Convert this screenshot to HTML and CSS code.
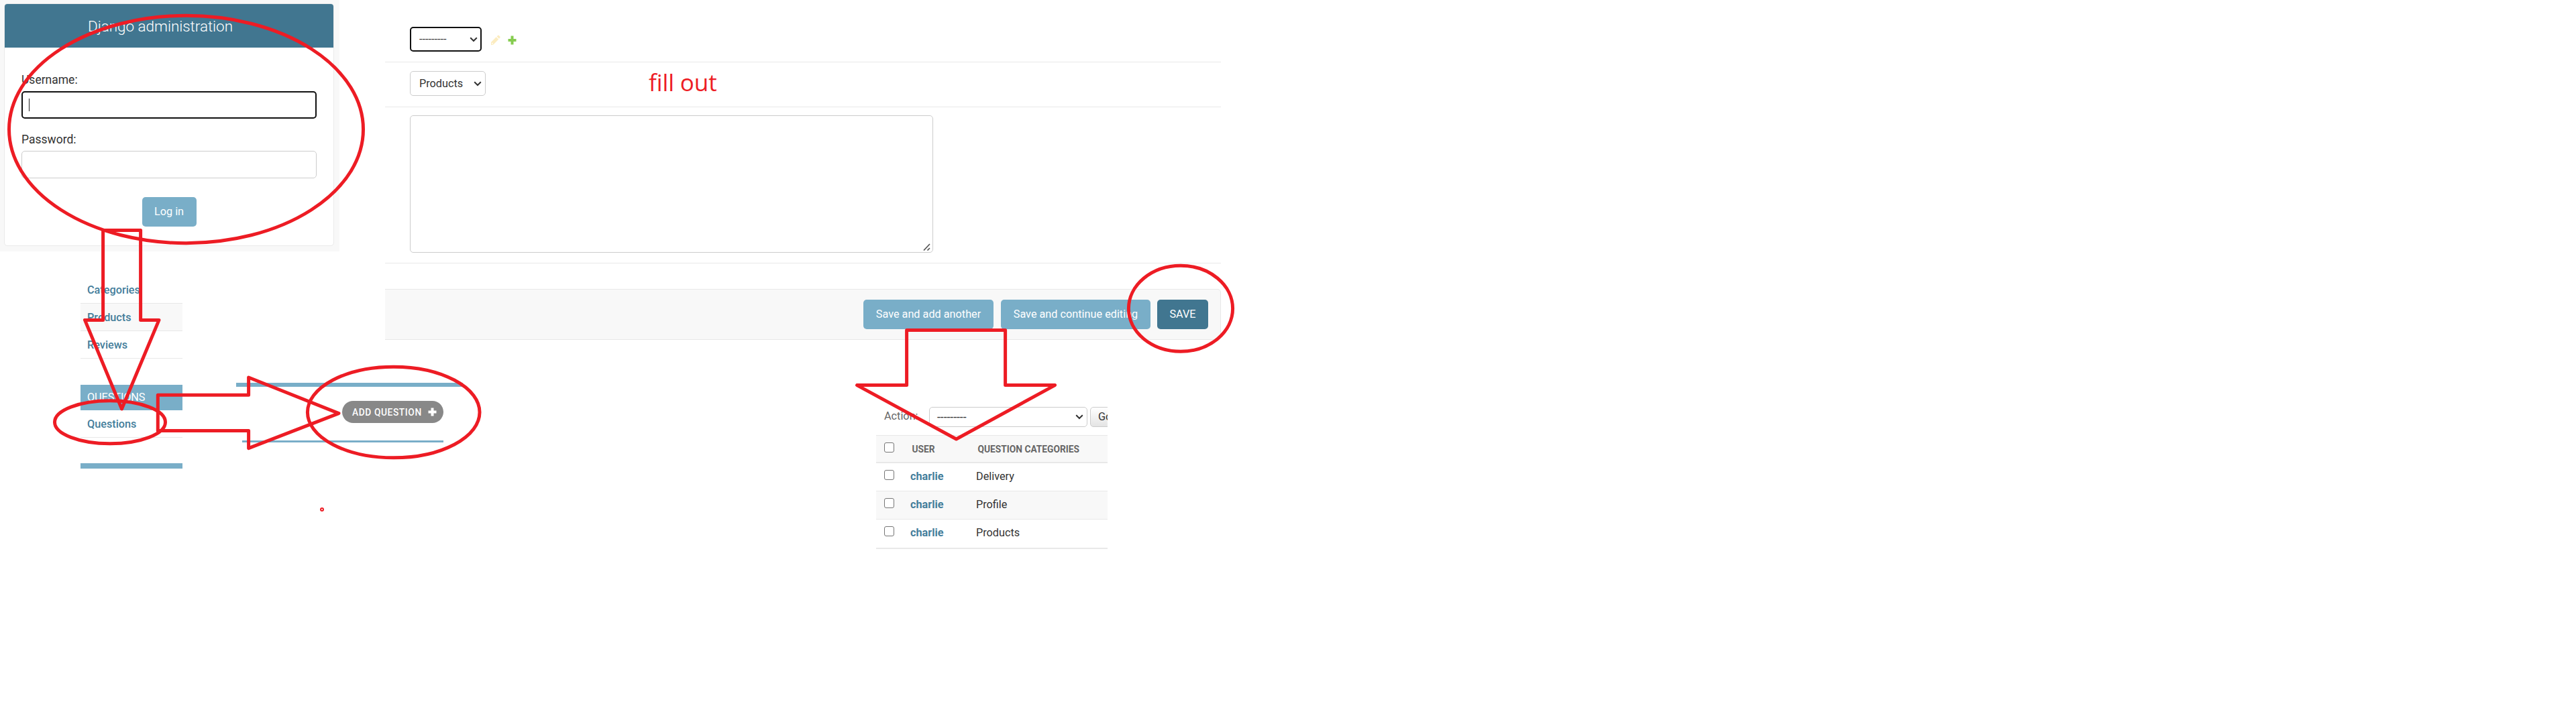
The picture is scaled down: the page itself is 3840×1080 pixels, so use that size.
FILE: index.html
```html
<!DOCTYPE html>
<html lang="en">
<head>
<meta charset="utf-8">
<title>Django administration walkthrough</title>
<link rel="stylesheet" href="styles.css">
</head>
<body>
<main class="board">

  <section class="piece login">
    <div class="login-card">
      <header class="login-header"><h1>Django administration</h1></header>
      <div class="login-form">
        <span class="label">Username:</span>
        <div class="field focused"><span class="caret"></span></div>
        <span class="label second">Password:</span>
        <div class="field"></div>
        <div class="login-submit"><span class="button">Log in</span></div>
      </div>
    </div>
  </section>

  <section class="piece sidebar">
    <a class="model">Categories</a>
    <a class="model alt">Products</a>
    <a class="model">Reviews</a>
    <h2 class="module">QUESTIONS</h2>
    <a class="model">Questions</a>
    <div class="sidebar-end"></div>
  </section>

  <section class="piece tools">
    <div class="tools-bar"></div>
    <div class="tools-body">
      <a class="add-link">ADD QUESTION
        <svg width="13" height="13" viewBox="0 0 13 13"><path d="M4.500 0.500h4v4h4v4h-4v4h-4v-4h-4v-4h4z" fill="#fff"/></svg>
      </a>
    </div>
  </section>

  <section class="piece form">
    <div class="form-row row-user">
      <div class="select focused">
        <span>---------</span>
        <svg class="chevron" width="12" height="8" viewBox="0 0 12 8"><path d="M1.200 1.200L6 6l4.800-4.800"/></svg>
      </div>
      <svg class="pencil" width="15" height="16" viewBox="0 0 15 16"><path d="M1 11L8.700 3.300l3.500 3.500L4.500 14.500 1 15.200zM9.600 2.400l1.400-1.400q.9-.8 1.800 0l1.500 1.600q.8.900 0 1.700L13 5.800z" fill="#fcecc0"/><circle cx="3" cy="12.700" r=".9" fill="#fff"/></svg>
      <svg class="plus" width="13" height="14" viewBox="0 0 13 14"><path d="M4.500 .5h4v4.500h4v4h-4v4.500h-4V9h-4V5h4z" fill="#86cc50"/></svg>
    </div>
    <div class="form-row row-category">
      <div class="select wide">
        <span>Products</span>
        <svg class="chevron" width="12" height="8" viewBox="0 0 12 8"><path d="M1.200 1.200L6 6l4.800-4.800"/></svg>
      </div>
      <span class="note">fill out</span>
    </div>
    <div class="form-row row-text">
      <div class="textarea">
        <svg width="11" height="11" viewBox="0 0 11 11"><path d="M1 10.500L10 1M6.500 10.500L10 7" fill="none" stroke="#555" stroke-width="1.700"/></svg>
      </div>
    </div>
    <footer class="submit-row">
      <span class="button">Save and add another</span>
      <span class="button">Save and continue editing</span>
      <span class="button primary">SAVE</span>
    </footer>
  </section>

  <section class="piece results">
    <div class="actions">
      <span class="actions-label">Action:</span>
      <div class="select small">
        <span>---------</span>
        <svg class="chevron" width="12" height="8" viewBox="0 0 12 8"><path d="M1.200 1.200L6 6l4.800-4.800"/></svg>
      </div>
      <span class="go">Go</span>
    </div>
    <div class="line head"><i class="check"></i><span>USER</span><span>QUESTION CATEGORIES</span></div>
    <div class="line"><i class="check"></i><b>charlie</b><span>Delivery</span></div>
    <div class="line alt"><i class="check"></i><b>charlie</b><span>Profile</span></div>
    <div class="line last"><i class="check"></i><b>charlie</b><span>Products</span></div>
  </section>

  <svg class="marks" width="3840" height="1080" viewBox="0 0 3840 1080">
    <ellipse cx="277.500" cy="193" rx="264" ry="169.700"/>
    <path d="M153.600 343.500H209.600V477.400H237L181.500 610 126.500 477.400H153.600Z"/>
    <ellipse cx="164" cy="629.700" rx="82.500" ry="32"/>
    <path d="M235.300 589.300H370.600V563L505 616.600 370.600 668.700V642.500H235.300Z"/>
    <ellipse cx="586.700" cy="615" rx="128.300" ry="67.800"/>
    <circle class="dot" cx="480" cy="760" r="2"/>
    <path d="M1351.600 492.600H1498.600V574.600H1572.600L1425.500 655 1277.500 574.600H1351.600Z"/>
    <ellipse cx="1760" cy="460.300" rx="77.600" ry="64"/>
  </svg>
</main>
</body>
</html>
```
FILE: styles.css
```css
* { box-sizing: border-box; }
body { margin: 0; background: #fff; font: 400 16.25px/20px Roboto, "Liberation Sans", sans-serif; color: #333; }
h1, h2 { margin: 0; font-weight: 400; }
svg { display: block; flex: none; }
.board { position: relative; width: 3840px; height: 1080px; overflow: hidden; }
.piece { position: absolute; }

.button { display: flex; align-items: center; justify-content: center; height: 44px; padding: 0 19px; border-radius: 5px; background: #79aec8; color: #fff; white-space: nowrap; }
.button.primary { background: #417690; }

/* login page */
.login { left: 0; top: 0; width: 506px; height: 375px; padding: 5px 8px 8px 6px; background: #f8f8f8; }
.login-card { height: 362px; border: 1px solid #eaeaea; border-radius: 5px; background: #fff; overflow: hidden; }
.login-header { display: flex; align-items: center; height: 65px; padding-left: 124px; background: #417690; color: #fff; }
.login-header h1 { font-size: 22.5px; font-weight: 300; letter-spacing: -0.05px; line-height: 28px; }
.login-form { display: flex; flex-direction: column; padding: 38px 25px 0; }
.label { font-size: 17.5px; line-height: 20px; }
.label.second { margin-top: 21px; }
.field { display: flex; align-items: center; height: 41px; margin-top: 7px; padding-left: 9px; border: 1px solid #ccc; border-radius: 5px; }
.field.focused { border: 2px solid #101010; }
.caret { width: 1px; height: 19px; background: #222; }
.login-submit { display: flex; justify-content: center; margin-top: 28px; }
.login-submit .button { width: 81px; }

/* model list */
.sidebar { left: 120px; top: 412px; width: 152px; }
.model { display: flex; align-items: center; height: 41px; padding: 1px 0 0 10px; border-bottom: 1px solid #e8e8e8; color: #447e9b; font-weight: 500; }
.model.alt { background: #f8f8f8; }
.module { display: flex; align-items: center; height: 38px; margin-top: 39px; padding-left: 10px; background: #79aec8; color: #fff; font-size: 16.25px; letter-spacing: -0.08px; }
.sidebar-end { height: 8px; margin-top: 38px; background: #79aec8; }

/* add button strip */
.tools { left: 352px; top: 571px; width: 338px; }
.tools-bar { height: 6px; background: #79aec8; }
.tools-body { display: flex; justify-content: flex-end; height: 83px; margin: 0 29px 0 9px; padding-top: 21px; border-bottom: 3px solid #79aec8; }
.add-link { display: flex; align-items: center; justify-content: space-between; width: 151px; height: 33px; padding: 0 10px 0 15px; border-radius: 17px; background: #888; color: #fff; font-size: 13.75px; font-weight: 500; letter-spacing: 0.6px; white-space: nowrap; }

/* change form */
.form { left: 574px; top: 0; width: 1246px; }
.form-row { display: flex; padding-left: 37px; border-bottom: 1px solid #e8e8e8; }
.row-user { height: 93px; padding-top: 40px; }
.row-category { height: 67px; padding-top: 13px; }
.row-text { height: 233px; padding-top: 12px; }
.select { display: flex; align-items: center; justify-content: space-between; width: 107px; height: 37px; padding: 0 5px 0 13px; border: 1px solid #ccc; border-radius: 5px; background: #fff; }
.select.focused { padding: 0 4px 0 12px; border: 2px solid #101010; }
.select.wide { width: 113px; }
.chevron path { fill: none; stroke: #333; stroke-width: 2; }
.pencil { margin: 12px 0 0 13px; }
.plus { margin: 13px 0 0 11px; }
.note { margin: -3px 0 0 243px; color: #ed1c24; font: 400 35px/40px "Open Sans", "Noto Sans", sans-serif; letter-spacing: -0.1px; white-space: nowrap; }
.textarea { display: flex; align-items: flex-end; justify-content: flex-end; width: 780px; height: 205px; padding: 0 3px 2px; border: 1px solid #ccc; border-radius: 5px; }
.submit-row { display: flex; justify-content: flex-end; height: 76px; margin-top: 38px; padding: 15px 18px; border: 1px solid #e8e8e8; border-left: 0; border-radius: 0 5px 5px 0; background: #f8f8f8; }
.submit-row .button { width: 194px; }
.submit-row .button:nth-child(2) { width: 223px; margin: 0 10px 0 11px; }
.submit-row .primary { width: 76px; padding: 0; }

/* change list */
.results { left: 1306px; top: 607px; width: 345px; overflow: hidden; }
.actions { display: flex; height: 42px; color: #666; }
.actions-label { flex: none; width: 79px; padding: 4px 0 0 12px; line-height: 20px; }
.select.small { flex: none; width: 236px; height: 30px; padding: 0 5px 0 11px; color: #333; font-size: 17.5px; }
.go { flex: none; width: 46px; height: 30px; margin-left: 4px; padding: 4px 0 0 11px; border: 1px solid #ccc; border-radius: 5px; background: linear-gradient(#fff, #e4e4e4); color: #333; line-height: 20px; }
.line { display: grid; grid-template-columns: 39px 98px 1fr; height: 42px; padding: 10px 0 0 12px; border-bottom: 1px solid #e8e8e8; white-space: nowrap; }
.line b { color: #447e9b; }
.line.alt { background: #f8f8f8; }
.line.last { height: 44px; border-bottom-width: 2px; }
.line.head { grid-template-columns: 41.5px 98px 1fr; border-top: 1px solid #e8e8e8; border-bottom-width: 2px; background: #f8f8f8; color: #666; font-size: 13.75px; font-weight: 700; }
.check { width: 15px; height: 15px; border: 1px solid #767676; border-radius: 3px; background: #fff; }

/* hand-drawn annotations */
.marks { position: absolute; left: 0; top: 0; fill: none; stroke: #ed1c24; stroke-width: 5; stroke-linejoin: round; }
.dot { stroke-width: 2; }
```
